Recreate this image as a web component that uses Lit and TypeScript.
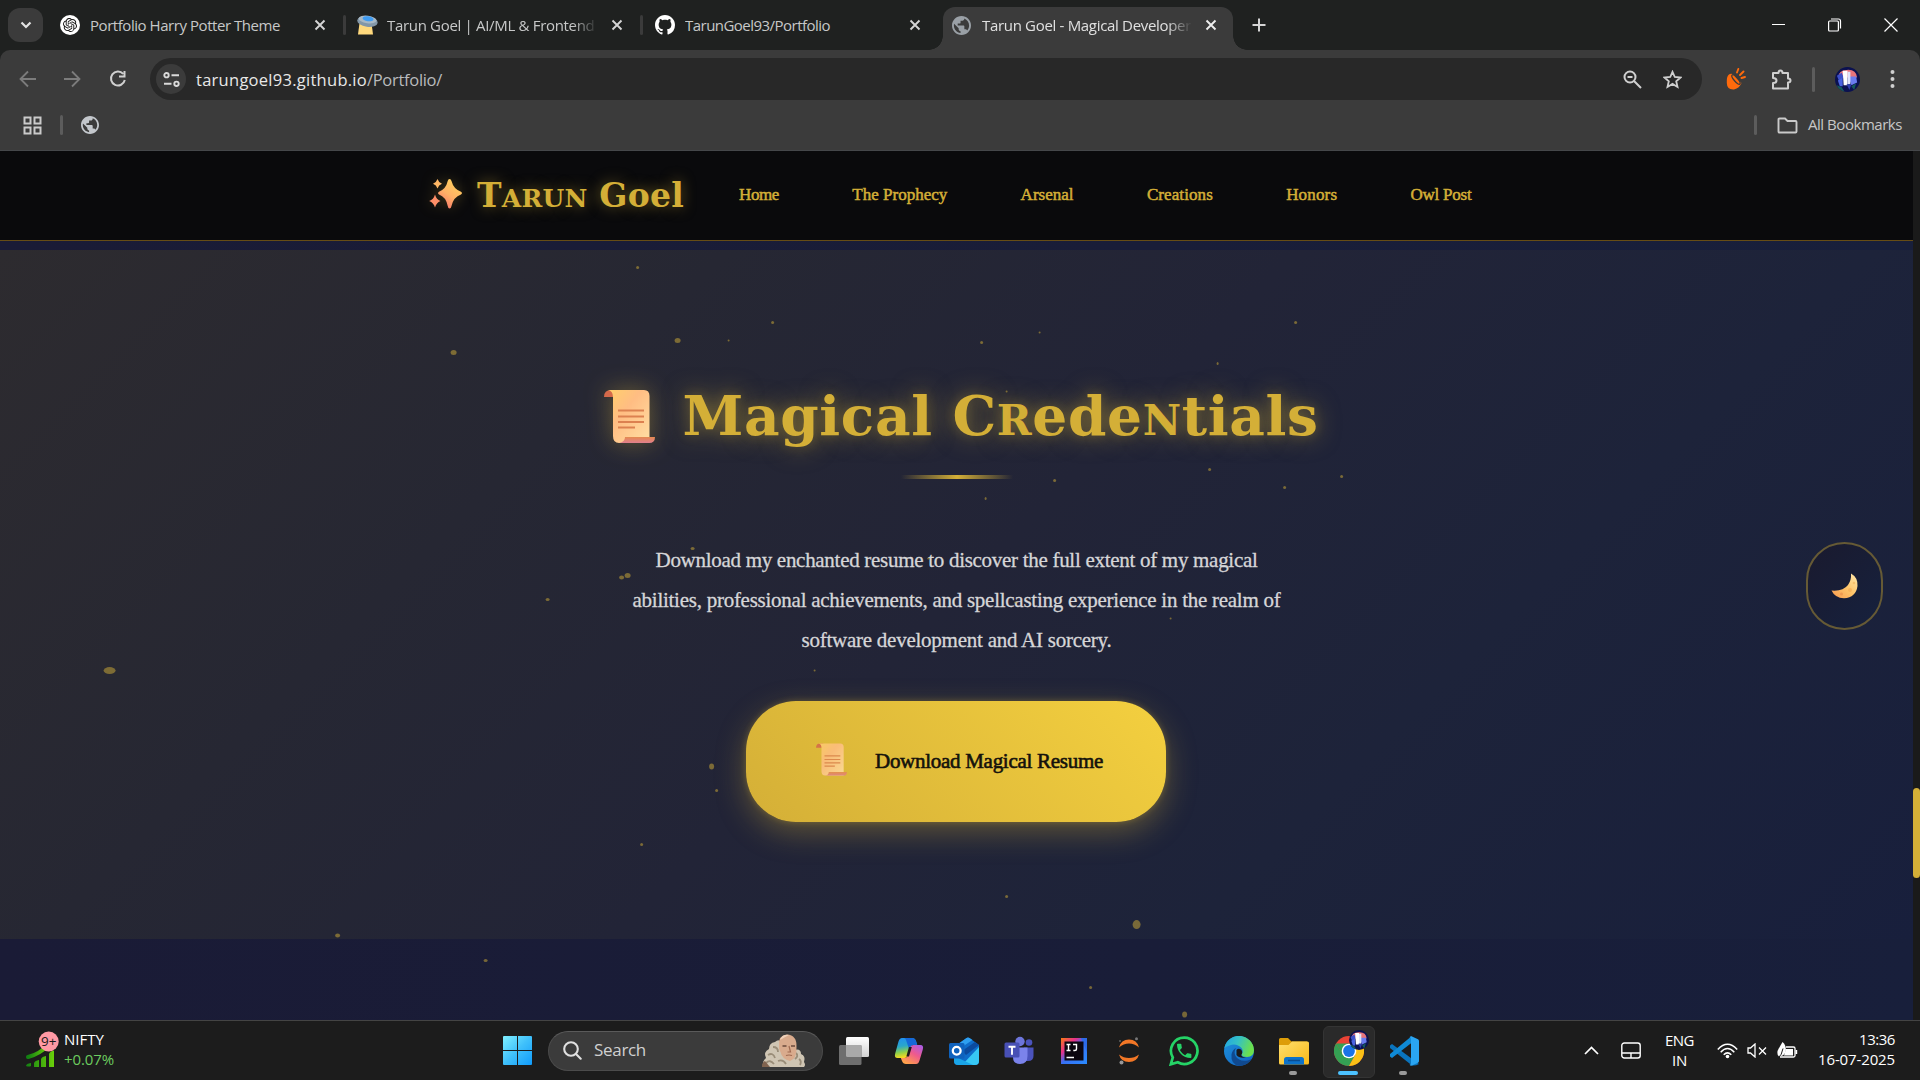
import { LitElement, html, css, svg } from "lit";
import { customElement, property } from "lit/decorators.js";

/** A run of text whose tracking is adjusted so that it fills a given width. */
@customElement("fit-text")
class FitText extends LitElement {
  @property({ type: Number }) w = 100;
  static styles = css`
    :host { display: inline-block; white-space: pre; flex: none; }
    .run { display: inline-block; white-space: pre; }
  `;
  firstUpdated() {
    const run = this.renderRoot.querySelector(".run") as HTMLElement;
    const natural = run.getBoundingClientRect().width;
    const count = (this.textContent || "").length;
    this.style.width = `${this.w}px`;
    if (count) run.style.letterSpacing = `${(this.w - natural) / count}px`;
  }
  render() {
    return html`<span class="run"><slot></slot></span>`;
  }
}

const GLOBE =
  "M12 2C6.48 2 2 6.48 2 12s4.48 10 10 10 10-4.48 10-10S17.52 2 12 2zm-1 17.93c-3.95-.49-7-3.85-7-7.93 0-.62.08-1.21.21-1.79L9 15v1c0 1.1.9 2 2 2v1.93zm6.9-2.54c-.26-.81-1-1.39-1.9-1.39h-1v-3c0-.55-.45-1-1-1H8v-2h2c.55 0 1-.45 1-1V7h2c1.1 0 2-.9 2-2v-.41c2.93 1.19 5 4.06 5 7.41 0 2.08-.8 3.97-2.1 5.39z";
const KNOT =
  "M22.2819 9.8211a5.9847 5.9847 0 0 0-.5157-4.9108 6.0462 6.0462 0 0 0-6.5098-2.9A6.0651 6.0651 0 0 0 4.9807 4.1818a5.9847 5.9847 0 0 0-3.9977 2.9 6.0462 6.0462 0 0 0 .7427 7.0966 5.98 5.98 0 0 0 .511 4.9107 6.051 6.051 0 0 0 6.5146 2.9001A5.9847 5.9847 0 0 0 13.2599 24a6.0557 6.0557 0 0 0 5.7718-4.2058 5.9894 5.9894 0 0 0 3.9977-2.9001 6.0557 6.0557 0 0 0-.7475-7.0729zm-9.022 12.6081a4.4755 4.4755 0 0 1-2.8764-1.0408l.1419-.0804 4.7783-2.7582a.7948.7948 0 0 0 .3927-.6813v-6.7369l2.02 1.1686a.071.071 0 0 1 .038.052v5.5826a4.504 4.504 0 0 1-4.4945 4.4944zm-9.6607-4.1254a4.4708 4.4708 0 0 1-.5346-3.0137l.142.0852 4.783 2.7582a.7712.7712 0 0 0 .7806 0l5.8428-3.3685v2.3324a.0804.0804 0 0 1-.0332.0615L9.74 19.9502a4.4992 4.4992 0 0 1-6.1408-1.6464zM2.3408 7.8956a4.485 4.485 0 0 1 2.3655-1.9728V11.6a.7664.7664 0 0 0 .3879.6765l5.8144 3.3543-2.0201 1.1685a.0757.0757 0 0 1-.071 0l-4.8303-2.7865A4.504 4.504 0 0 1 2.3408 7.872zm16.5963 3.8558L13.1038 8.364 15.1192 7.2a.0757.0757 0 0 1 .071 0l4.8303 2.7913a4.4944 4.4944 0 0 1-.6765 8.1042v-5.6772a.79.79 0 0 0-.407-.667zm2.0107-3.0231l-.142-.0852-4.7735-2.7818a.7759.7759 0 0 0-.7854 0L9.409 9.2297V6.8974a.0662.0662 0 0 1 .0284-.0615l4.8303-2.7866a4.4992 4.4992 0 0 1 6.6802 4.66zM8.3065 12.863l-2.02-1.1638a.0804.0804 0 0 1-.038-.0567V6.0742a4.4992 4.4992 0 0 1 7.3757-3.4537l-.142.0805L8.704 5.459a.7948.7948 0 0 0-.3927.6813zm1.0976-2.3654l2.602-1.4998 2.6069 1.4998v2.9994l-2.5974 1.4997-2.6067-1.4997Z";
const OCTOCAT =
  "M8 0C3.58 0 0 3.58 0 8c0 3.54 2.29 6.53 5.47 7.59.4.07.55-.17.55-.38 0-.19-.01-.82-.01-1.49-2.01.37-2.53-.49-2.69-.94-.09-.23-.48-.94-.82-1.13-.28-.15-.68-.52-.01-.53.63-.01 1.08.58 1.23.82.72 1.21 1.87.87 2.33.66.07-.52.28-.87.51-1.07-1.78-.2-3.64-.89-3.64-3.95 0-.87.31-1.59.82-2.15-.08-.2-.36-1.02.08-2.12 0 0 .67-.21 2.2.82.64-.18 1.32-.27 2-.27s1.36.09 2 .27c1.53-1.04 2.2-.82 2.2-.82.44 1.1.16 1.92.08 2.12.51.56.82 1.27.82 2.15 0 3.07-1.87 3.75-3.65 3.95.29.25.54.73.54 1.48 0 1.07-.01 1.93-.01 2.2 0 .21.15.46.55.38A8.01 8.01 0 0 0 16 8c0-4.42-3.58-8-8-8z";
const HANDSET =
  "M6.62 10.79c1.44 2.83 3.76 5.14 6.59 6.59l2.2-2.2c.27-.27.67-.36 1.02-.24 1.12.37 2.33.57 3.57.57.55 0 1 .45 1 1V20c0 .55-.45 1-1 1-9.39 0-17-7.61-17-17 0-.55.45-1 1-1h3.5c.55 0 1 .45 1 1 0 1.25.2 2.45.57 3.57.11.35.03.74-.25 1.02l-2.2 2.2z";

const globe = (size: number, color: string) =>
  html`<svg width=${size} height=${size} viewBox="2 2 20 20"><path d=${GLOBE} fill=${color} /></svg>`;

const cross = (color: string) =>
  html`<svg width="12" height="12" viewBox="0 0 12 12"><path d="M1.5 1.5l9 9M10.5 1.5l-9 9" stroke=${color} stroke-width="1.9" /></svg>`;

const avatar = (size: number, id: string) => html`
  <svg width=${size} height=${size} viewBox="0 0 26 26">
    <clipPath id=${id}><circle cx="13" cy="13" r="13" /></clipPath>
    <g clip-path="url(#${id})">
      <rect width="26" height="26" fill="#0b1150" />
      <path d="M3 11Q4 3 12 3Q22 2 23 11Z" fill="#e8747a" />
      <path d="M2 9l5-3 2 5-5 3z" fill="#3c50c8" />
      <path d="M14 10h8l1 6-6 3z" fill="#6a7cf0" />
      <path d="M3 14l5-3v9H5z" fill="#4a63e0" />
      <path d="M2 19l5 2 3 5H4zM17 20l5-3-2 7z" fill="#155a5c" />
      <path d="M8 4h5v15H9z" fill="#fff" /><path d="M13 5h3v13h-3z" fill="#dfe3fb" />
      <path d="M12 18l3 6 2-6z" fill="#2f3fae" />
    </g>
  </svg>`;

const scroll = (w: number, h: number, id: string) => html`
  <svg class="scroll" width=${w} height=${h} viewBox="0 0 51 53">
    <defs>
      <linearGradient id="${id}a" x1="0" y1="0" x2="1" y2="1">
        <stop offset="0" stop-color="#ffcf6b" /><stop offset=".4" stop-color="#ffbd83" /><stop offset="1" stop-color="#ffe0a4" />
      </linearGradient>
      <linearGradient id="${id}b" x1="0" y1="0" x2="0" y2="1">
        <stop offset="0" stop-color="#e58a4f" /><stop offset="1" stop-color="#e07f8e" />
      </linearGradient>
    </defs>
    <path d="M0 7Q0 0 7 0H12V7Z" fill="#d4694a" />
    <path d="M4 0H40Q45.500 0 45.500 6V53H15Q9 53 9 46V7Q9 1 4 0Z" fill="url(#${id}a)" />
    <path d="M15 53Q21 52 21 47H51Q51 53 45 53Z" fill="url(#${id}b)" />
    <path d="M14 20.500H40M14 26.500H40M14 32H40M14 37.500H31" stroke="#dc8150" stroke-width="2" />
  </svg>`;

const sparkles = html`
  <svg class="sparkles" width="34" height="30" viewBox="0 0 34 30">
    <defs><linearGradient id="sp" x1=".8" y1="0" x2=".2" y2="1">
      <stop offset="0" stop-color="#ffd65c" /><stop offset=".55" stop-color="#ffb066" /><stop offset="1" stop-color="#f8706a" />
    </linearGradient></defs>
    <path d="M20.500 0Q22 0 22.500 2Q24.500 10 32 12.700Q34 14 32 15.500Q24.500 18 22.500 27Q22 29.500 20.500 29.500Q19.200 29.500 18.700 27Q17 18 10 15.500Q8 14 10 12.700Q17 10 18.700 2Q19.200 0 20.500 0Z" fill="url(#sp)" />
    <path d="M8.500 0Q9.600 3.500 13 4.800Q9.600 6 8.500 9.500Q7.400 6 4 4.800Q7.400 3.500 8.500 0Z" fill="#ffb765" />
    <path d="M6 15.500Q7.400 20.500 11.500 22Q7.400 23.500 6 28.500Q4.600 23.500 .2 22Q4.600 20.500 6 15.500Z" fill="#ff8f68" />
  </svg>`;

/* Gold dust drifting over the page: x, y, width, height. */
const DUST: number[][] = [
  [637, 267, 3, 3], [453, 352, 6, 5], [677, 340, 6, 5], [728, 340, 2, 2], [772, 322, 3, 3], [981, 342, 3, 3],
  [1039, 332, 2, 2], [1295, 322, 3, 3], [1217, 363, 2, 3], [1006, 391, 2, 2], [1209, 469, 3, 3], [1341, 476, 3, 3],
  [1284, 487, 3, 3], [1054, 480, 3, 3], [985, 498, 2, 3], [547, 599, 4, 3], [692, 548, 4, 3], [621, 577, 5, 4],
  [627, 575, 6, 5], [1170, 618, 2, 2], [814, 670, 2, 2], [109, 670, 12, 7], [711, 766, 5, 6], [716, 790, 3, 3],
  [641, 844, 3, 3], [1006, 896, 3, 3], [1136, 924, 8, 9], [337, 935, 5, 4], [485, 960, 4, 3], [1090, 987, 3, 3],
  [1184, 1014, 5, 6], [928, 558, 3, 2], [1127, 561, 2, 3], [1015, 602, 3, 2],
];

const NAV: [string, number][] = [
  ["Home", 40], ["The Prophecy", 95], ["Arsenal", 53], ["Creations", 66], ["Honors", 51], ["Owl Post", 61],
];

const APPS = [
  { name: "taskview", art: svg`<defs><linearGradient id="tv" x2="0" y2="1"><stop stop-color="#fff"/><stop offset="1" stop-color="#d2d2d2"/></linearGradient></defs><rect x="7" y="1" width="23" height="20" rx="1.500" fill="url(#tv)"/><rect x="0" y="9" width="22.500" height="20" rx="1.500" fill="#6e6e6e"/><path d="M7 9h15.500v12H8.500Q7 21 7 19.500z" fill="#a9a9a9"/>` },
  { name: "copilot", art: svg`<defs><linearGradient id="c1" x2=".2" y2="1"><stop stop-color="#1f8df5"/><stop offset=".45" stop-color="#2aa7c9"/><stop offset=".75" stop-color="#8fd04a"/><stop offset="1" stop-color="#f6d820"/></linearGradient><linearGradient id="c2" x1="1" x2=".3" y2="1"><stop stop-color="#a35cf0"/><stop offset=".5" stop-color="#ef5a8d"/><stop offset="1" stop-color="#ffa24a"/></linearGradient></defs><path d="M8 2h10q3 0 4 3l1.200 4h-4q-2 0-2.700 2.300l-2.500 8.200q-1 2.500-3.500 2.500H3.500Q0 22 1.200 17.500L4.500 5.500Q5.500 2 8 2z" fill="url(#c1)"/><path d="M18 2q3 0 4 3l1.200 4h-4q-2 0-2.700 2.300l-1 3L12 4q-.6-2-2-2z" fill="#1568d8"/><path d="M22 28H12q-3 0-4-3l-1.200-3h4q2 0 2.700-2.300L16 11.500Q17 9 19.500 9h7Q30 9 28.800 13.500L25.500 24.500Q24.500 28 22 28z" fill="url(#c2)"/><path d="M12.300 20.500l2.700-9.500h2.800l-2.800 9.500z" fill="#1c1c1c"/>` },
  { name: "outlook", art: svg`<path d="M5 11L17.500 2Q19 1 20.500 2L30 9v16q0 4-4 4H9q-4 0-4-4z" fill="#0f6cc9"/><path d="M5 11L17.500 2Q19 1 20.500 2l3 2L10 13z" fill="#2d9ff0"/><path d="M13 15L26 6l4 3-13 10z" fill="#0b4a9e"/><path d="M30 11v14q0 4-4 4H13z" fill="#37c8f5"/><path d="M5 20l19 9H9q-4 0-4-4z" fill="#1aa5e8"/><rect x="0" y="7" width="15.500" height="15.500" rx="1.500" fill="#0f62bd"/><circle cx="7.700" cy="14.700" r="3.900" fill="none" stroke="#fff" stroke-width="2.300"/>` },
  { name: "teams", art: svg`<circle cx="16" cy="5.500" r="4.700" fill="#6d75db"/><circle cx="25" cy="6.500" r="3.300" fill="#4b53bc"/><path d="M20 11.500h9.500V20q0 5-5.500 5h-4z" fill="#4b53bc"/><path d="M9 11.500h14.500V20q0 8-7.500 8t-7-8z" fill="#7b83eb"/><rect x=".5" y="6.500" width="15" height="15" rx="1.500" fill="#4850b5"/><path d="M4.500 10.700h7M8 10.700v8" stroke="#fff" stroke-width="1.900"/>` },
  { name: "intellij", art: svg`<defs><linearGradient id="ij" y2="1"><stop stop-color="#f97a12"/><stop offset=".3" stop-color="#e8308c"/><stop offset=".5" stop-color="#3770f5"/><stop offset="1" stop-color="#2a8cff"/></linearGradient></defs><rect x="2" y="2" width="26" height="26" fill="url(#ij)"/><path d="M22 2h6v14z" fill="#2d6be8"/><rect x="5.500" y="5.500" width="19" height="19" fill="#0c0610"/><path d="M7.500 8.500h4M9.500 8.500v6M7.500 14.500h4M14 8.500h3.500v4.500q0 1.500-1.700 1.500h-1.500" stroke="#fff" stroke-width="1.400" fill="none"/><path d="M7.500 21.500h7.500" stroke="#fff" stroke-width="1.500"/>` },
  { name: "jupyter", art: svg`<path d="M5 11.500Q7 3.500 15 3.500t10 8Q20.500 7.500 15 7.500T5 11.500zM5 18.500Q7 26 15 26t10-7.500Q20.500 22 15 22T5 18.500z" fill="#f37726"/><circle cx="7.500" cy="26.500" r="2" fill="#989798"/><circle cx="22.500" cy="2.800" r="1.500" fill="#767677"/><circle cx="6" cy="5" r="1" fill="#616262"/>` },
  { name: "whatsapp", art: svg`<path d="M15.200 1.600a13.200 13.200 0 1 1-6.400 24.700L1.800 28.300l2-6.800A13.200 13.200 0 0 1 15.200 1.600z" fill="none" stroke="#25d366" stroke-width="2.700"/><g transform="translate(5.600 5.300) scale(.8)"><path d=${HANDSET} fill="#25d366"/></g>` },
  { name: "edge", art: svg`<defs><linearGradient id="e1" x2="1" y2=".3"><stop stop-color="#1fa2e6"/><stop offset=".5" stop-color="#35c1c4"/><stop offset="1" stop-color="#6be04c"/></linearGradient><linearGradient id="e2" y2="1"><stop stop-color="#1f94dd"/><stop offset="1" stop-color="#0f5fc2"/></linearGradient></defs><circle cx="15" cy="15" r="15" fill="url(#e2)"/><path d="M.3 12A15 15 0 0 1 30 14q0 7-7 7-5 0-5.500-2.500Q20 15.500 17.500 12 11 5 .3 12z" fill="url(#e1)"/><path d="M12 12Q9.500 16 11.500 20 15 26 24 24.500q2-.6 3.500-1.500Q23 30 15 30 6.500 28 7.500 18.500 8.500 13.500 12 12z" fill="#10498f"/><path d="M12.500 14Q14.500 11.500 17.500 14 19 17 17.200 19 17.500 21 22 21.500 15 22.500 12.500 19z" fill="#1b1b1b"/>` },
  { name: "explorer", dot: true, art: svg`<defs><linearGradient id="fx" y2="1"><stop stop-color="#ffdf6e"/><stop offset="1" stop-color="#f9b917"/></linearGradient></defs><path d="M0 3.500Q0 2 1.500 2H9l3.500 3.500H28V14H0z" fill="#dd9d08"/><path d="M0 9h9.500L13 5.500h15.500Q30 5.500 30 7v20q0 1.500-1.500 1.500h-27Q0 28.500 0 27z" fill="url(#fx)"/><path d="M5 28.500V23.500Q5 21 7.500 21h15q2.500 0 2.500 2.500v5z" fill="#0d72c9"/><path d="M9 24.500h12" stroke="#0a4d91" stroke-width="1.500"/>` },
  { name: "chrome", art: svg`<circle cx="15" cy="15" r="15" fill="#ea4335"/><path d="M2 7.500A15 15 0 0 0 15 30l6.300-11.300L8.500 18.500z" fill="#34a053"/><path d="M15 30A15 15 0 0 0 28 7.500H15l6.500 11z" fill="#fbc116"/><path d="M2 7.500L8.500 18.500 15 7.500z" fill="#34a053"/><circle cx="15" cy="15" r="7.300" fill="#fff"/><circle cx="15" cy="15" r="5.900" fill="#1a73e8"/>` },
  { name: "vscode", dot: true, art: svg`<path d="M1 9.500L3 8 30 28q-3.500 2-7 1.500L1 12z" fill="#0a74bd"/><path d="M1 20.500L3 22 23 6.500V.5q-1 0-2 1L1 18z" fill="#0f8ad6"/><path d="M20.500 1.200Q21.500 0 23 .5L29 3.300Q30 4 30 5v20q0 1-1 1.700L23 29.500q-1.500.5-2.500-.7Q22 29 22 27V3Q22 1 20.500 1.200z" fill="#2aa5f2"/>` },
];

@customElement("app-root")
class AppRoot extends LitElement {
  static styles = css`
    :host {
      display: flex; flex-direction: column; width: 1920px; height: 1080px; overflow: hidden; position: relative;
      background: #1c1c1c; font-family: "Open Sans", "Noto Sans", sans-serif; color: #e3e3e3;
    }
    * { box-sizing: border-box; }
    svg { display: block; flex: none; }
    .center { display: flex; align-items: center; justify-content: center; flex: none; }

    /* tab strip */
    .strip { height: 50px; flex: none; background: #1f2120; display: flex; align-items: center; font-size: 15px; color: #c7c8c8; }
    .strip fit-text { line-height: 20px; }
    .drop { width: 35px; height: 34px; border-radius: 12px; background: #3b3b3b; margin-left: 8px; }
    .tab { display: flex; align-items: center; height: 50px; flex: none; }
    .tab .icon { width: 20px; margin-right: 10px; }
    .tab .title { overflow: hidden; }
    .tab .fade { -webkit-mask-image: linear-gradient(90deg, #000 88%, transparent); mask-image: linear-gradient(90deg, #000 88%, transparent); }
    .t1 { margin-left: 17px; width: 283px; }
    .t1 .title { width: 224px; }
    .t2 { width: 283px; margin-left: 11px; }
    .t2 .title { width: 211px; margin-right: 13px; }
    .t3 { width: 266px; margin-left: 12px; }
    .t3 .title { width: 224px; }
    .tabsep { width: 3px; height: 20px; border-radius: 2px; background: #3b3b3b; flex: none; }
    .active {
      position: relative; align-self: flex-end; height: 43px; width: 290px; margin-left: 22px; padding: 0 0 7px 9px;
      background: #3b3b3b; border-radius: 12px 12px 0 0; color: #e0e0e0;
    }
    .active::before, .active::after {
      content: ""; position: absolute; bottom: 0; width: 14px; height: 14px;
    }
    .active::before { left: -14px; background: radial-gradient(circle at 0 0, transparent 13.5px, #3b3b3b 14px); }
    .active::after { right: -14px; background: radial-gradient(circle at 100% 0, transparent 13.5px, #3b3b3b 14px); }
    .active .title { width: 210px; margin-right: 13px; }
    .plus { margin-left: 19px; }
    .winctl { display: flex; align-items: center; gap: 42px; margin-left: auto; margin-right: 22px; }

    /* toolbar */
    .chromebody { background: #3b3b3b; height: 100px; flex: none; border-radius: 10px 10px 0 0; }
    .under { background: #1f2120; flex: none; }
    .toolbar { height: 58px; display: flex; align-items: center; padding: 0 0 0 19px; }
    .toolbar .fwd { margin-left: 26px; }
    .toolbar .reload { margin-left: 28px; }
    .omni {
      margin-left: 23px; width: 1552px; height: 42px; border-radius: 21px; background: #282828; display: flex; align-items: center; flex: none;
      font-size: 16.500px; color: #e8e8e8; padding-left: 6px;
    }
    .site { width: 30px; height: 30px; border-radius: 50%; background: #3b3b3b; margin-right: 10px; }
    .omni .path { color: #b9bbbd; }
    .omni .zoomed { margin-left: auto; margin-right: 21px; }
    .omni .star { margin-right: 20px; }
    .carrot { margin-left: 24px; }
    .puzzle { margin-left: 25px; }
    .vbar { width: 3px; height: 25px; border-radius: 2px; background: #5c5c5c; flex: none; }
    .toolbar .vbar { margin: 0 20px 0 20px; }
    .dots { margin-left: 30px; }
    .marks { height: 42px; display: flex; align-items: center; padding: 0 18px 8px 23px; font-size: 15px; color: #c7c7c7; }
    .marks .vbar { height: 20px; }
    .marks .v1 { margin: 0 18px 0 18px; }
    .marks .v2 { margin: 0 20px 0 auto; }
    .marks fit-text { margin-left: 10px; line-height: 20px; margin-top: -2px; }

    /* page */
    .page { height: 870px; flex: none; display: flex; border-top: 1px solid #45474a; }
    .view { width: 1913px; display: flex; flex-direction: column; background: linear-gradient(90deg, #1a1b36 0%, #191d38 60%, #181f3b 100%); }
    .rail { width: 7px; background: #1a1a1a; padding-top: 637px; }
    .thumb { height: 90px; border-radius: 4px; background: #d4af37; }
    .nav {
      height: 90px; flex: none; background: #0a0a0c; border-bottom: 1px solid #664c15; display: flex; align-items: center;
      padding-left: 429px; color: #d4af37;
    }
    .brand {
      font: bold 33px/50px "DejaVu Serif", serif; margin-left: 14px; text-shadow: 0 0 14px rgba(212, 175, 55, 0.5);
    }
    .sparkles { filter: drop-shadow(0 0 7px rgba(212, 175, 55, 0.3)); margin-top: -3px; }
    .sc { font-variant-caps: all-small-caps; font-size: 1.1em; line-height: 0; }
    .links { display: flex; gap: 73.300px; margin-left: 55px; font: 17px/24px "Liberation Serif", serif; -webkit-text-stroke: 0.500px #d4af37; margin-top: -1px; }
    .section {
      height: 689px; margin-top: 9px; flex: none; display: flex; flex-direction: column; align-items: center;
      background: linear-gradient(135deg, #2d2b2f 0%, #262733 28%, #222437 50%, #1d233a 72%, #181f3c 100%);
    }
    .title-row { display: flex; align-items: center; margin-top: 133px; height: 66px; margin-left: 9px; }
    .headline {
      font: bold 55px/66px "DejaVu Serif", serif; color: #d4af37;
      text-shadow: 0 0 24px rgba(212, 175, 55, 0.55), 0 0 12px rgba(212, 175, 55, 0.2); margin-left: 28px;
    }
    .title-row .scroll { filter: drop-shadow(0 0 12px rgba(212, 175, 55, 0.4)); }
    .rule { width: 112px; height: 4px; margin-top: 26px; background: linear-gradient(90deg, transparent, #d4af37, transparent); }
    .copy { display: flex; flex-direction: column; align-items: center; margin-top: 61px; font: 21px/40px "Liberation Serif", serif; color: #d6d6d8; -webkit-text-stroke: 0.300px #d6d6d8; }
    .cta {
      width: 420px; height: 121px; margin-top: 41px; margin-left: -1px; border-radius: 50px; background: linear-gradient(45deg, #d4af37, #f4d03f);
      box-shadow: 0 10px 30px rgba(212, 175, 55, 0.35), 0 0 6px rgba(212, 175, 55, 0.3);
      display: flex; align-items: center; padding-left: 70px; font: 21px/30px "Liberation Serif", serif; color: #14120c;
      -webkit-text-stroke: 0.600px #14120c;
    }
    .cta .scroll { margin-top: -5px; opacity: 0.85; }
    .cta fit-text { margin-left: 28px; margin-top: -2px; }
    .moon {
      position: absolute; left: 1806px; top: 542px; width: 77px; height: 88px; border-radius: 38.500px; border: 2px solid #665a35;
      background: linear-gradient(135deg, #1a1a2e, #16213e);
    }
    .dust { position: absolute; left: 0; top: 0; width: 1913px; height: 1020px; pointer-events: none; }

    /* taskbar */
    .task { height: 60px; flex: none; border-top: 1px solid #444; background: #1c1c1c; display: flex; align-items: center; font-size: 15px; color: #fff; }
    .task fit-text { line-height: 20px; }
    .stock { width: 39px; height: 40px; margin-left: 24px; }
    .lines { display: flex; flex-direction: column; margin-top: -4px; }
    .quote { margin-left: 1px; }
    .up { color: #6ccb5f; }
    .start { margin-left: 389px; }
    .search {
      width: 275px; height: 40px; margin-left: 16px; border-radius: 20px; background: #3b3b3b; border: 1px solid #4b4b4b;
      border-top-color: #5a5a5a; display: flex; align-items: center; padding-left: 14px; font-size: 17px; color: #d0d0d0; flex: none;
    }
    .search fit-text { margin-left: 12px; margin-top: -1px; }
    .search .face { margin-left: auto; margin-right: 16px; }
    .apps { display: flex; margin-left: 3px; }
    .app { width: 55px; height: 50px; position: relative; }
    .app.chrome::before { content: ""; position: absolute; left: 2px; top: 0; width: 50px; height: 50px; border-radius: 6px; background: #2a2a2a; border: 1px solid #343434; }
    .app svg { position: relative; }
    .app .badge { position: absolute; left: 28px; top: 4px; }
    .app .mark { position: absolute; bottom: 1px; left: 23px; width: 8px; height: 4px; border-radius: 2px; background: #9a9a9a; }
    .app.chrome .mark { left: 17px; width: 20px; background: #4cc2ff; }
    .tray { display: flex; align-items: center; margin-left: auto; margin-right: 25px; }
    .tray .pad { margin-left: 22px; }
    .lang { align-items: center; margin-left: 24px; margin-right: 23px; margin-top: -2px; }
    .tray .vol { margin-left: 9px; }
    .tray .bat { margin-left: 10px; }
    .clock { align-items: flex-end; margin-left: 20px; }
  `;

  render() {
    return html`
      <div class="strip">
        <div class="drop center"><svg width="12" height="8" viewBox="0 0 12 8"><path d="M1.500 1.500L6 6l4.500-4.500" fill="none" stroke="#e3e3e3" stroke-width="2.200" /></svg></div>
        <div class="tab t1">
          <div class="icon"><svg width="20" height="20" viewBox="0 0 20 20"><circle cx="10" cy="10" r="10" fill="#fff" /><g transform="translate(3 3) scale(.583)"><path d=${KNOT} fill="#111" /></g></svg></div>
          <div class="title"><fit-text .w=${190}>Portfolio Harry Potter Theme</fit-text></div>${cross("#d5d5d5")}
        </div>
        <div class="tabsep"></div>
        <div class="tab t2">
          <div class="icon"><svg width="21" height="20" viewBox="0 0 21 20"><path d="M2.500 8h12l1.500 11.500H1z" fill="#ffd97d" /><ellipse cx="10.500" cy="6.500" rx="10.300" ry="5.300" fill="#8397a8" transform="rotate(8 10 6)" /><ellipse cx="10.500" cy="4.500" rx="9" ry="3.800" fill="#a9b8c4" transform="rotate(8 10 5)" /><ellipse cx="11" cy="3.600" rx="5.500" ry="2.500" fill="#3f9cf2" transform="rotate(8 10 4)" /></svg></div>
          <div class="title fade"><fit-text .w=${211}>Tarun Goel | AI/ML &amp; Frontend </fit-text></div>${cross("#d5d5d5")}
        </div>
        <div class="tabsep"></div>
        <div class="tab t3">
          <div class="icon"><svg width="20" height="20" viewBox="0 0 16 16"><path d=${OCTOCAT} fill="#fff" /></svg></div>
          <div class="title"><fit-text .w=${145}>TarunGoel93/Portfolio</fit-text></div>${cross("#d5d5d5")}
        </div>
        <div class="tab active">
          <div class="icon">${globe(19, "#9aa0a6")}</div>
          <div class="title fade"><fit-text .w=${209}>Tarun Goel - Magical Developer</fit-text></div>${cross("#eee")}
        </div>
        <svg class="plus" width="14" height="14" viewBox="0 0 14 14"><path d="M7 .5v13M.5 7h13" stroke="#d5d5d5" stroke-width="2" /></svg>
        <div class="winctl">
          <svg width="14" height="14" viewBox="0 0 14 14"><path d="M0 6.500h13" stroke="#fff" /></svg>
          <svg width="14" height="14" viewBox="0 0 14 14" fill="none" stroke="#fff" stroke-width="1.200"><rect x=".6" y="3" width="9.800" height="10" rx="1" /><path d="M3 1h7.500q2 0 2 2v7.500" /></svg>
          <svg width="14" height="14" viewBox="0 0 14 14"><path d="M.5 .5l13 13M13.500 .5l-13 13" stroke="#fff" stroke-width="1.200" /></svg>
        </div>
      </div>

      <div class="under"><div class="chromebody">
        <div class="toolbar">
          <svg width="18" height="18" viewBox="0 0 18 18" fill="none" stroke="#7c7c7c" stroke-width="1.800"><path d="M17 9H2M9 1.500L1.500 9 9 16.500" /></svg>
          <svg class="fwd" width="18" height="18" viewBox="0 0 18 18" fill="none" stroke="#7c7c7c" stroke-width="1.800"><path d="M1 9h15M9 1.500L16.500 9 9 16.500" /></svg>
          <svg class="reload" width="18" height="18" viewBox="0 0 18 18" fill="none" stroke="#d0d0d0" stroke-width="2"><path d="M14.200 3.800A7 7 0 1 0 15.800 10M15.500 1v5.500H10" /></svg>
          <div class="omni">
            <div class="site center"><svg width="17" height="15" viewBox="0 0 17 15" fill="none" stroke="#dadada" stroke-width="1.900"><circle cx="3.500" cy="3.200" r="2.200" /><path d="M8.500 3.200H16M1 11.800h7.500" /><circle cx="13.500" cy="11.800" r="2.200" /></svg></div>
            <fit-text .w=${171}>tarungoel93.github.io</fit-text><fit-text class="path" .w=${75}>/Portfolio/</fit-text>
            <svg class="zoomed" width="19" height="19" viewBox="0 0 19 19" fill="none" stroke="#cfcfcf" stroke-width="2"><circle cx="7" cy="7" r="5.500" /><path d="M11 11l7 7M4.500 7h5" /></svg>
            <svg class="star" width="19" height="19" viewBox="0 0 19 19"><path d="M9.500 1.800l2.300 5.200 5.700.5-4.300 3.800 1.300 5.600-5-3-5 3 1.300-5.600L1.500 7.500l5.700-.5z" fill="none" stroke="#cfcfcf" stroke-width="1.800" /></svg>
          </div>
          <svg class="carrot" width="20" height="24" viewBox="0 0 20 24"><path d="M1 11Q2.500 6 6.500 7L15.500 16Q13.500 21 8 22.500 1 23 .8 16 .7 13 1 11z" fill="#ff6a0c" /><ellipse cx="10" cy="12.500" rx="1.900" ry="6" fill="none" stroke="#3b3b3b" stroke-width="1.300" transform="rotate(-40 10 12.500)" /><path d="M11 5.500l1.300-3.500M14 8l3.500-3.500M15.500 11l3.500-1" stroke="#ff6a0c" stroke-width="1.900" stroke-linecap="round" /></svg>
          <svg class="puzzle" width="21" height="21" viewBox="0 0 21 21"><path d="M2 4h5.500q0-2.500 2-2.500t2 2.500H17v5.500q2.500 0 2.500 2t-2.500 2V19.500H2V14q3.500 0 3.500-2.500T2 9z" fill="none" stroke="#cfcfcf" stroke-width="2" stroke-linejoin="round" /></svg>
          <div class="vbar"></div>${avatar(25, "av1")}
          <svg class="dots" width="5" height="20" viewBox="0 0 5 20" fill="#cfcfcf"><circle cx="2.500" cy="3" r="2" /><circle cx="2.500" cy="10" r="2" /><circle cx="2.500" cy="17" r="2" /></svg>
        </div>
        <div class="marks">
          <svg width="19" height="19" viewBox="0 0 19 19" fill="none" stroke="#cacaca" stroke-width="2"><path d="M1.500 1.500h6v6h-6zM11.500 1.500h6v6h-6zM1.500 11.500h6v6h-6zM11.500 11.500h6v6h-6z" /></svg>
          <div class="vbar v1"></div>${globe(18, "#c3c7cc")}
          <div class="vbar v2"></div>
          <svg width="21" height="17" viewBox="0 0 21 17"><path d="M1.500 2.500q0-1 1-1H8l2.500 2.500h8q1 0 1 1v9.500q0 1-1 1h-16q-1 0-1-1z" fill="none" stroke="#cacaca" stroke-width="1.900" /></svg>
          <fit-text .w=${94}>All Bookmarks</fit-text>
        </div>
      </div></div>

      <div class="page">
        <div class="view">
          <div class="nav">
            ${sparkles}
            <fit-text class="brand" .w=${207}>T<span class="sc">arun</span> Goel</fit-text>
            <div class="links">${NAV.map(([label, w]) => html`<fit-text .w=${w}>${label}</fit-text>`)}</div>
          </div>
          <div class="section">
            <div class="title-row">
              ${scroll(51, 53, "s1")}
              <fit-text class="headline" .w=${636}>Magical C<span class="sc">r</span>ede<span class="sc">n</span>tials</fit-text>
            </div>
            <div class="rule"></div>
            <div class="copy">
              <fit-text .w=${602}>Download my enchanted resume to discover the full extent of my magical</fit-text>
              <fit-text .w=${648}>abilities, professional achievements, and spellcasting experience in the realm of</fit-text>
              <fit-text .w=${310}>software development and AI sorcery.</fit-text>
            </div>
            <div class="cta">${scroll(31, 33, "s2")}<fit-text .w=${228}>Download Magical Resume</fit-text></div>
          </div>
        </div>
        <div class="rail"><div class="thumb"></div></div>
      </div>

      <svg class="dust" viewBox="0 0 1913 1020">
        ${DUST.map(([x, y, w, h]) => svg`<ellipse cx=${x + 0.6} cy=${y + 0.6} rx=${w / 2} ry=${h / 2} fill="#d4af37" opacity=".5" />`)}
      </svg>
      <div class="moon center">
        <svg width="27" height="26" viewBox="0 0 27 26">
          <defs><linearGradient id="mn" x1="0" y1="1" x2="1" y2="0"><stop offset="0" stop-color="#f99a50" /><stop offset=".5" stop-color="#ffc468" /><stop offset="1" stop-color="#ffeab0" /></linearGradient></defs>
          <path d="M20 .5Q27 4.500 26.500 13 25 24.500 13 25.300 4 25 .5 17.500 12 18.500 17 12 20.500 7 20 .5z" fill="url(#mn)" />
          <circle cx="19" cy="17" r="2" fill="#f5a850" opacity=".6" /><circle cx="10.500" cy="21" r="1.500" fill="#e88a48" opacity=".6" /><circle cx="23" cy="10" r="1.300" fill="#f5b860" opacity=".7" />
        </svg>
      </div>

      <div class="task">
        <svg class="stock" viewBox="0 0 39 40">
          <defs><linearGradient id="st"><stop stop-color="#128012" /><stop offset="1" stop-color="#6bd00a" /></linearGradient></defs>
          <path d="M4 26Q16 23 24 14" fill="none" stroke="url(#st)" stroke-width="4" stroke-linecap="round" />
          <path d="M2 35q0-2.500 5-3v3q-2 1-5 0zM10 36v-4q1-2.500 5-3v7zM17 36v-8q1-2.500 5-3v11zM25 36V23q1-3 5-3.500V36z" fill="url(#st)" />
          <circle cx="24.700" cy="10.500" r="10" fill="#ff99a4" />
          <text x="17" y="15.300" font-size="13.500" fill="#1a1a1a">9+</text>
        </svg>
        <div class="lines quote"><fit-text .w=${40}>NIFTY</fit-text><fit-text class="up" .w=${50}>+0.07%</fit-text></div>
        <svg class="start" width="29" height="29" viewBox="0 0 29 29">
          <defs><linearGradient id="wn" x2="1" y2="1"><stop stop-color="#80f0ff" /><stop offset=".5" stop-color="#3fc0fb" /><stop offset="1" stop-color="#109bfb" /></linearGradient></defs>
          <path d="M1 0h13v14H0V1q0-1 1-1zM15 0h13q1 0 1 1v13H15zM0 15h14v14H1q-1 0-1-1zM15 15h14v13q0 1-1 1H15z" fill="url(#wn)" />
        </svg>
        <div class="search">
          <svg width="19" height="19" viewBox="0 0 19 19" fill="none" stroke="#e0e0e0" stroke-width="2.100" stroke-linecap="round"><circle cx="8" cy="8" r="6.800" /><path d="M13 13l4.700 4.700" /></svg>
          <fit-text .w=${52}>Search</fit-text>
          <svg class="face" width="44" height="33" viewBox="0 0 44 33">
            <path d="M1 33Q0 27 4 24 1 18 7 15 7 9 13 8 17 4 20 9L32 16Q39 14 39 20 44 22 42 28 44 31 42 33z" fill="#cfc5b3" />
            <path d="M4 29q4-4 8 1M6 21q5-3 7 3M11 13q5 0 5 5M34 19q3 3-1 6M37 25q3 2 1 6M16 27q5-2 8 3" fill="none" stroke="#9a8d78" stroke-width="1.800" />
            <path d="M0 33q0-5 3-6l5 6z" fill="#80634f" />
            <path d="M17 12Q16 1 25 .5 35 1 34.500 13 35 25 28 27 20 25 18.500 18 16.500 15 17 12z" fill="#d9ab8d" />
            <path d="M18 6Q20 0 27 1 23 3 18 6z" fill="#f0d2ba" /><path d="M20.500 12h4M29 12h4" stroke="#6b4b3c" stroke-width="1.400" />
            <path d="M27 12l1.500 6h-3M24 21.500q3-1 6 0" fill="none" stroke="#a06b52" stroke-width="1.200" />
          </svg>
        </div>
        <div class="apps">
          ${APPS.map((a) => html`<div class="app center ${a.name}">
            <svg width="30" height="30" viewBox="0 0 30 30">${a.art}</svg>
            ${a.name === "chrome" ? html`<div class="badge">${avatar(20, "av2")}</div>` : ""}
            ${a.dot || a.name === "chrome" ? html`<span class="mark"></span>` : ""}
          </div>`)}
        </div>
        <div class="tray">
          <svg width="15" height="9" viewBox="0 0 15 9"><path d="M1 8l6.500-6.500L14 8" fill="none" stroke="#fff" stroke-width="1.700" /></svg>
          <svg class="pad" width="20" height="17" viewBox="0 0 20 17" fill="none" stroke="#fff" stroke-width="1.400"><rect x=".8" y="1" width="18.400" height="15" rx="2.500" /><path d="M1 11h18M10 11v5" /></svg>
          <div class="lines lang"><fit-text .w=${29}>ENG</fit-text><fit-text .w=${15}>IN</fit-text></div>
          <svg width="21" height="16" viewBox="0 0 21 16" fill="none" stroke="#fff" stroke-width="1.500"><path d="M.8 6.500Q10.500-4 20.200 6.500M3.700 9.200Q10.500 2 17.300 9.200M6.700 11.800Q10.500 8 14.300 11.800" /><circle cx="10.500" cy="13.500" r="1.800" fill="#fff" stroke="none" /></svg>
          <svg class="vol" width="20" height="15" viewBox="0 0 20 15" fill="none" stroke="#fff" stroke-width="1.300"><path d="M1 5h2.500L8 1v13L3.500 10H1z" /><path d="M12 4.500l7 7M19 4.500l-7 7" /></svg>
          <svg class="bat" width="21" height="18" viewBox="0 0 21 18"><path d="M9 5h7.500q1.500 0 1.500 1.500v7q0 1.500-1.500 1.500H3" fill="none" stroke="#fff" stroke-width="1.300" /><path d="M18.500 8h1.700v4h-1.700zM9 7h7v6.500H7z" fill="#fff" /><path d="M5.500 0Q10 4 8.500 10 7 14 2 14.500 0 14 .5 9 2 6 5.500 0z" fill="#fff" /><path d="M.8 16.500Q5 13 6 6.500" fill="none" stroke="#1c1c1c" stroke-width="1" /></svg>
          <div class="lines clock"><fit-text .w=${36}>13:36</fit-text><fit-text .w=${77}>16-07-2025</fit-text></div>
        </div>
      </div>
    `;
  }
}
